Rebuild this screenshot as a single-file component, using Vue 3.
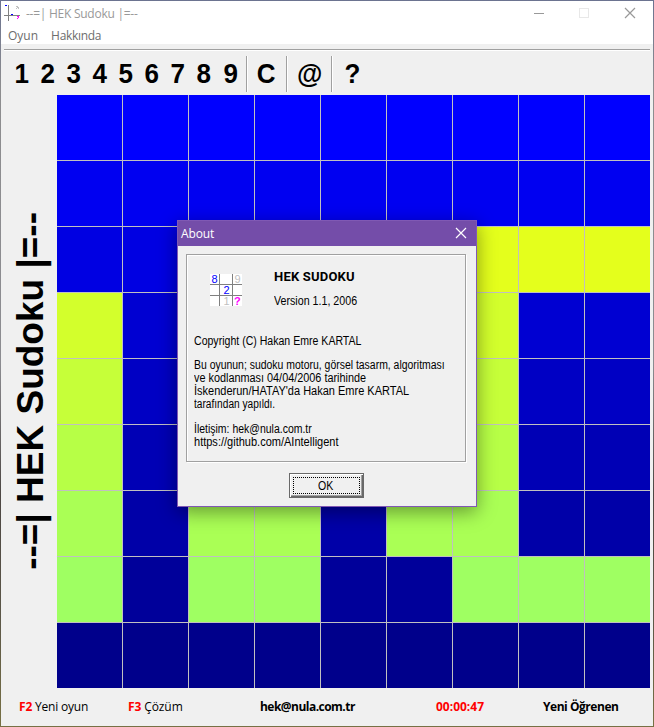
<script setup>
const blues = ['#0000ff', '#0000f1', '#0000e2', '#0000d2', '#0000c4', '#0000b5', '#0000a8', '#00009a', '#00008b']
const limes = ['', '', '#e4ff1c', '#d3ff2c', '#c6ff39', '#b7ff46', '#aaff55', '#9fff62', '']
const pattern = [
  '000000000',
  '000000000',
  '000000111',
  '100000100',
  '100000100',
  '100000100',
  '101101100',
  '101100111',
  '000000000',
]
const cells = pattern.flatMap((row, r) => [...row].map((v) => (v === '1' ? limes[r] : blues[r])))
const digits = [1, 2, 3, 4, 5, 6, 7, 8, 9]
</script>

<template>
  <div class="desktop">
    <div class="window">
      <header class="titlebar">
        <svg class="app-icon" width="16" height="16" viewBox="0 0 16 16" shape-rendering="crispEdges">
          <path d="M4.500 0v16M0 10.500h16" stroke="#808080" fill="none" />
          <path d="M1 .5h2M7 9.500h2" stroke="#0000ff" />
          <path d="M12 1.500h2M12 3.500h1M14 3.500h1M13 2.500h2" stroke="#c0c0c0" />
          <path d="M13 11.500h2M14 12.500h1M13 13.500h1" stroke="#ff00ff" />
        </svg>
        <span class="caption">--=| HEK Sudoku |=--</span>
        <svg class="controls" width="120" height="20" viewBox="0 0 120 20">
          <path d="M10 10.500h10" stroke="#999" shape-rendering="crispEdges" />
          <rect x="55.500" y="5.500" width="9" height="9" fill="none" stroke="#e8e8e8" />
          <path d="M101 5l10 10M111 5l-10 10" stroke="#999" stroke-width="1.200" />
        </svg>
      </header>
      <nav class="menu"><span class="m1">Oyun</span><span class="m2">Hakkında</span></nav>
      <div class="client">
        <div class="toolbar">
          <span v-for="d in digits" :key="d" class="tool"><span class="glyph">{{ d }}</span></span>
          <span class="tool wide c"><span class="glyph">C</span></span>
          <span class="tool wide at"><span class="glyph">@</span></span>
          <span class="tool wide q"><span class="glyph">?</span></span>
        </div>
        <main class="main">
          <aside class="side"><span class="side-text">--=| HEK Sudoku |=--</span></aside>
          <div class="board">
            <div v-for="(c, i) in cells" :key="i" class="cell" :style="{ background: c }"></div>
          </div>
        </main>
        <footer class="status">
          <span class="s1"><b class="red">F2</b> Yeni oyun</span>
          <span class="s2"><b class="red">F3</b> Çözüm</span>
          <b class="s3">hek@nula.com.tr</b>
          <b class="s4 red">00:00:47</b>
          <b class="s5">Yeni Öğrenen</b>
        </footer>
      </div>
    </div>

    <section class="dialog">
      <header class="dialog-title">
        <span class="about">About</span>
        <svg class="close" width="12" height="12" viewBox="0 0 12 12"><path d="M1 1l10 10M11 1L1 11" stroke="#fff" stroke-width="1.200" /></svg>
      </header>
      <div class="dialog-body">
        <div class="panel">
          <div class="intro">
            <svg class="logo" width="32" height="32" viewBox="0 0 32 32">
              <rect width="32" height="32" fill="#fff" />
              <path d="M9.500 0v32M22.500 0v32M0 10.500h32M0 21.500h32" stroke="#808080" shape-rendering="crispEdges" />
              <g font-family="Liberation Sans" font-size="11">
                <text x="1.500" y="9" fill="#0000ff">8</text>
                <text x="24.500" y="9" fill="#c0c0c0">9</text>
                <text x="13.500" y="20" fill="#0000ff">2</text>
                <text x="13.500" y="31" fill="#c0c0c0">1</text>
                <text x="24" y="31" fill="#ff00ff" font-weight="bold">?</text>
              </g>
            </svg>
            <div class="heading">
              <b class="product">HEK SUDOKU</b>
              <span class="version">Version 1.1, 2006</span>
            </div>
          </div>
          <p class="copy"><span class="l0">Copyright (C) Hakan Emre KARTAL</span></p>
          <p class="desc">
            <span class="l1">Bu oyunun; sudoku motoru, görsel tasarm, algoritması</span>
            <span class="l2">ve kodlanması 04/04/2006 tarihinde</span>
            <span class="l3">İskenderun/HATAY'da Hakan Emre KARTAL</span>
            <span class="l4">tarafından yapıldı.</span>
          </p>
          <p class="contact">
            <span class="l5">İletişim: hek@nula.com.tr</span>
            <span class="l6">https://github.com/AIntelligent</span>
          </p>
        </div>
        <button class="ok"><span class="focus"><span class="ok-text">OK</span></span></button>
      </div>
    </section>
  </div>
</template>

<style>
body { margin: 0; overflow: hidden; }
</style>

<style scoped>
* { box-sizing: border-box; }
.desktop {
  position: relative;
  width: 654px;
  height: 727px;
  padding: 1px;
  background: linear-gradient(#6b7390 0%, #8d8d8f 12%, #8c8c91 50%, #4d4744 68%, #5c5748 85%, #777044 100%);
}
.window {
  width: 652px;
  height: 725px;
  background: #f0f0f0;
  font-family: 'Open Sans', 'Noto Sans', sans-serif;
  font-size: 12px;
  color: #000;
}
.titlebar { display: flex; align-items: center; height: 25px; background: #fff; padding-left: 3px; }
.app-icon { flex: none; margin-top: -1px; }
.caption { margin-left: 6px; color: #999; white-space: pre; line-height: 24px; letter-spacing: -0.26px; }
.controls { margin-left: auto; margin-right: 9px; margin-top: -2px; }
.menu { display: flex; height: 18px; background: #fff; color: #6d6d6d; line-height: 20px; padding-left: 7px; }
.m2 { margin-left: 13px; letter-spacing: -0.3px; }
.client { padding: 5px 3px 0; }
.toolbar {
  display: flex;
  align-items: center;
  height: 46px;
  padding: 3px 0 1px 4px;
  border-top: 1px solid #a0a0a0;
  box-shadow: inset 0 1px #fff;
  font: bold 28px/36px 'Liberation Sans', sans-serif;
}
.tool { width: 26.100px; text-align: center; }
.glyph { display: inline-block; transform: scaleX(0.93); margin-left: 1px; }
.wide { border-left: 1px solid #a0a0a0; box-shadow: inset 1px 0 #fff; height: 36px; }
.wide.c { width: 40px; margin-left: 3px; padding-right: 2px; }
.wide.at { width: 45px; }
.wide.q { width: 42px; }
.main { display: flex; height: 593px; }
.side { width: 53px; display: flex; align-items: center; justify-content: center; }
.side-text {
  writing-mode: vertical-rl;
  transform: rotate(180deg);
  font: bold 37px/55px 'Liberation Sans', sans-serif;
  white-space: nowrap;
  margin-top: -2px;
}
.board {
  display: grid;
  grid-template-columns: repeat(9, 65px);
  grid-template-rows: repeat(9, 65px);
  gap: 1px;
  background: #c0c0c0;
}
.status { display: flex; height: 37px; line-height: 38px; padding-left: 15px; white-space: nowrap; }
.red { color: #f00; }
.s1 { width: 109px; letter-spacing: -0.2px; }
.s2 { width: 132px; letter-spacing: -0.1px; }
.s3 { width: 176px; letter-spacing: -0.53px; }
.s4 { width: 107px; }
.s5 { letter-spacing: -0.46px; }
.dialog {
  position: absolute;
  left: 177px;
  top: 220px;
  width: 300px;
  height: 287px;
  border: 1px solid #8059b4;
  background: #f0f0f0;
  box-shadow: 0 5px 18px rgba(0, 0, 0, 0.4);
  font: 12px/13px 'Liberation Sans', sans-serif;
  color: #000;
}
.dialog-title {
  display: flex;
  align-items: center;
  justify-content: space-between;
  height: 25px;
  padding: 0 9px 0 3px;
  background: #744da9;
  color: #fff;
  font: 12px/24px 'Open Sans', sans-serif;
}
.about { letter-spacing: -0.1px; }
.close { margin-top: -1px; }
.dialog-body { padding: 8px; display: flex; flex-direction: column; align-items: center; }
.panel {
  align-self: stretch;
  width: 280px;
  height: 208px;
  border: 1px solid #a0a0a0;
  box-shadow: 1px 1px #fff, inset 1px 1px #fff;
  padding: 15px 0 0 7px;
  white-space: nowrap;
}
.intro { display: flex; height: 65px; }
.logo { margin: 4px 32px 0 16px; flex: none; }
.heading { display: flex; flex-direction: column; }
.product { font: bold 13px/13px Roboto, sans-serif; letter-spacing: 0.2px; }
.version { margin-top: 12px; transform: scaleX(0.89); transform-origin: left; }
p { margin: 0 0 11px; }
p span { display: block; width: max-content; transform-origin: left; }
.l0 { transform: scaleX(0.88); }
.l1 { transform: scaleX(0.87); }
.l2 { transform: scaleX(0.905); }
.l3 { transform: scaleX(0.917); }
.l4 { transform: scaleX(0.845); }
.l5 { transform: scaleX(0.873); }
.l6 { transform: scaleX(0.918); }
.contact { margin-top: 12px; }
.ok {
  margin-top: 11px;
  margin-right: 2px;
  width: 75px;
  height: 25px;
  padding: 3px;
  border: 1px solid #696969;
  background: #f0f0f0;
  box-shadow: inset 1px 1px #fff, inset -1px -1px #696969, inset -2px -2px #a0a0a0;
  font: 12px/17px 'Liberation Sans', sans-serif;
  color: #000;
}
.focus { display: block; height: 17px; border: 1px dotted #000; line-height: 16px; }
.ok-text { display: inline-block; transform: scaleX(0.88); }
</style>
